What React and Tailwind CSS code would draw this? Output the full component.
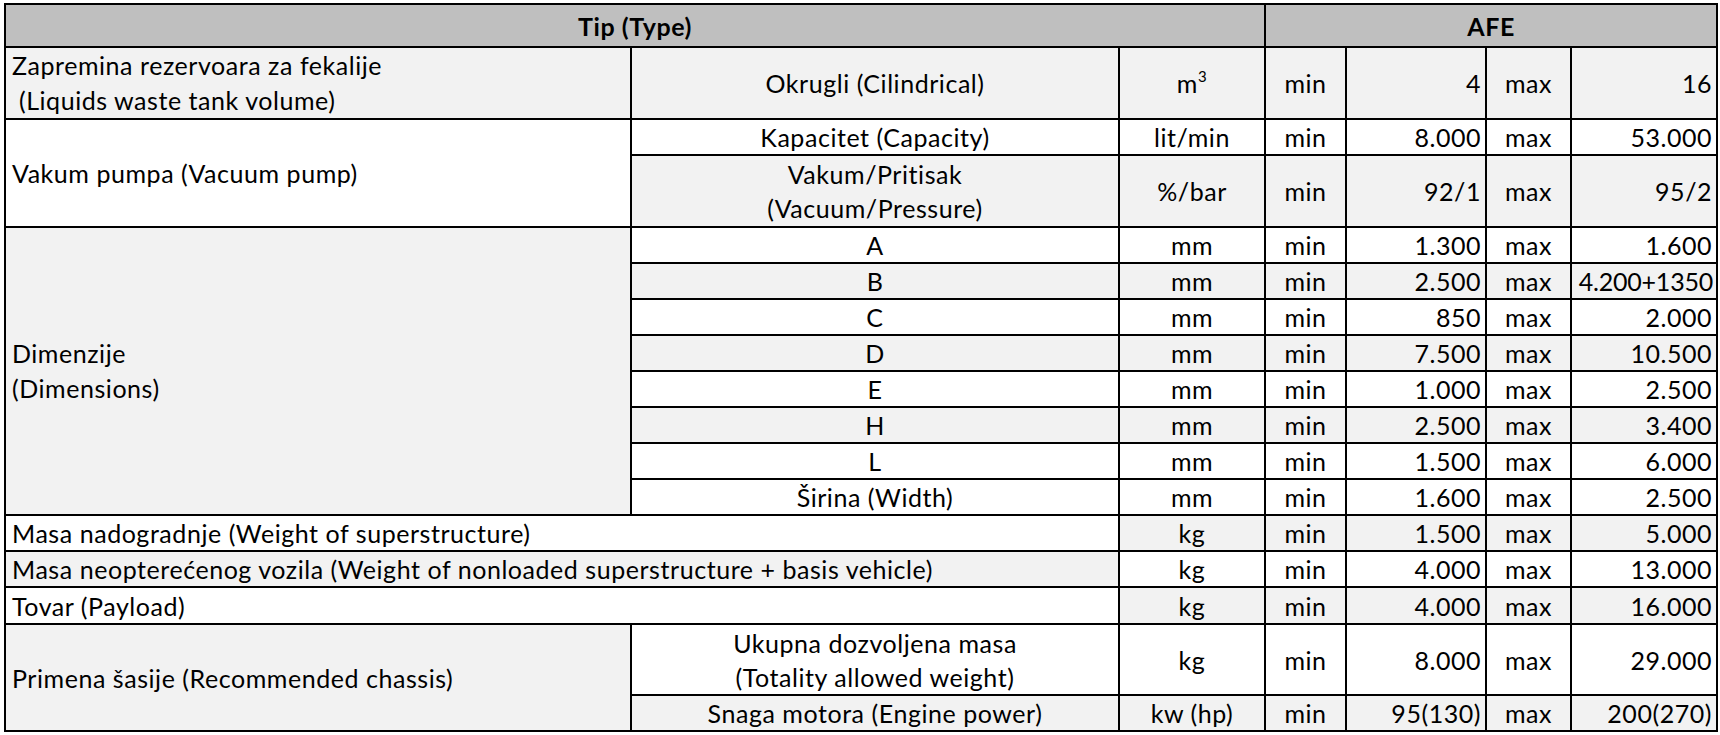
const light = "bg-[#f2f2f2]";
const white = "bg-white";
const cell = "border-2 border-black px-[6px] py-0 whitespace-nowrap align-middle";

function Vals({ unit, lo, hi, bg, tight }) {
  return (
    <>
      <td className={`${cell} ${bg} text-center`}>{unit}</td>
      <td className={`${cell} ${bg} text-center`}>min</td>
      <td className={`${cell} ${bg} text-right pr-[4px]`}>{lo}</td>
      <td className={`${cell} ${bg} text-center`}>max</td>
      <td className={`${cell} ${bg} text-right ${tight ? "pr-[3px] tracking-[-0.2px]" : "pr-[4px]"}`}>{hi}</td>
    </>
  );
}

const dims = [
  ["A", "1.300", "1.600", white],
  ["B", "2.500", "4.200+1350", light],
  ["C", "850", "2.000", white],
  ["D", "7.500", "10.500", light],
  ["E", "1.000", "2.500", white],
  ["H", "2.500", "3.400", light],
  ["L", "1.500", "6.000", white],
  ["Širina (Width)", "1.600", "2.500", white],
];

export default function App() {
  return (
    <div className="min-h-screen bg-white pl-[4px] pt-[3px] font-[family-name:Lato,sans-serif] text-[25px] leading-[30px] tracking-[0.55px] text-black">
      <table className="table-fixed border-collapse border-2 border-black w-[1712px]">
        <colgroup>
          <col className="w-[626px]" />
          <col className="w-[488px]" />
          <col className="w-[146px]" />
          <col className="w-[81px]" />
          <col className="w-[140px]" />
          <col className="w-[85px]" />
          <col className="w-[146px]" />
        </colgroup>
        <tbody>
          <tr className="h-[43px] bg-[#bfbfbf] font-bold">
            <td colSpan={3} className={`${cell} text-center`}>Tip (Type)</td>
            <td colSpan={4} className={`${cell} text-center`}>AFE</td>
          </tr>

          <tr className="h-[71px]">
            <td className={`${cell} ${light} leading-[35px]`}>
              Zapremina rezervoara za fekalije
              <br />
              &nbsp;(Liquids waste tank volume)
            </td>
            <td className={`${cell} ${light} text-center`}>Okrugli (Cilindrical)</td>
            <Vals
              unit={<>m<sup className="-top-[11px] text-[15px]">3</sup></>}
              lo="4"
              hi="16"
              bg={light}
            />
          </tr>

          <tr className="h-[36px]">
            <td rowSpan={2} className={`${cell} ${white}`}>Vakum pumpa (Vacuum pump)</td>
            <td className={`${cell} ${white} text-center`}>Kapacitet (Capacity)</td>
            <Vals unit="lit/min" lo="8.000" hi="53.000" bg={white} />
          </tr>
          <tr className="h-[72px]">
            <td className={`${cell} ${light} text-center leading-[34px]`}>
              Vakum/Pritisak
              <br />
              (Vacuum/Pressure)
            </td>
            <Vals unit="%/bar" lo="92/1" hi="95/2" bg={light} />
          </tr>

          {dims.map(([name, lo, hi, bg], i) => (
            <tr key={name} className="h-[36px]">
              {i === 0 && (
                <td rowSpan={dims.length} className={`${cell} ${light} leading-[35px]`}>
                  Dimenzije
                  <br />
                  (Dimensions)
                </td>
              )}
              <td className={`${cell} ${bg} text-center`}>{name}</td>
              <Vals unit="mm" lo={lo} hi={hi} bg={bg} tight={hi.length > 7} />
            </tr>
          ))}

          <tr className="h-[36px]">
            <td colSpan={2} className={`${cell} ${white}`}>Masa nadogradnje (Weight of superstructure)</td>
            <Vals unit="kg" lo="1.500" hi="5.000" bg={light} />
          </tr>
          <tr className="h-[36px]">
            <td colSpan={2} className={`${cell} ${light}`}>
              Masa neopterećenog vozila (Weight of nonloaded superstructure + basis vehicle)
            </td>
            <Vals unit="kg" lo="4.000" hi="13.000" bg={white} />
          </tr>
          <tr className="h-[37px]">
            <td colSpan={2} className={`${cell} ${white}`}>Tovar (Payload)</td>
            <Vals unit="kg" lo="4.000" hi="16.000" bg={light} />
          </tr>

          <tr className="h-[71px]">
            <td rowSpan={2} className={`${cell} ${light}`}>Primena šasije (Recommended chassis)</td>
            <td className={`${cell} ${white} text-center leading-[34px]`}>
              Ukupna dozvoljena masa
              <br />
              (Totality allowed weight)
            </td>
            <Vals unit="kg" lo="8.000" hi="29.000" bg={white} />
          </tr>
          <tr className="h-[36px]">
            <td className={`${cell} ${light} text-center`}>Snaga motora (Engine power)</td>
            <Vals unit="kw (hp)" lo="95(130)" hi="200(270)" bg={light} />
          </tr>
        </tbody>
      </table>
    </div>
  );
}
